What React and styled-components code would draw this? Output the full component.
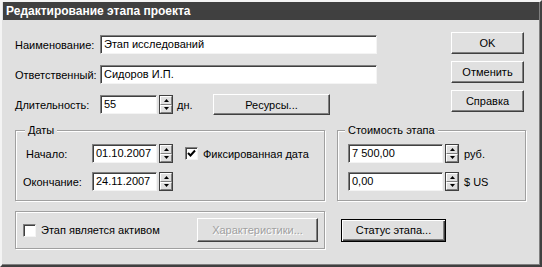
import React from 'react';
import styled, { createGlobalStyle } from 'styled-components';

const GlobalStyle = createGlobalStyle`
  body {
    margin: 0;
    background: #e0e0e0;
    font-family: "Liberation Sans", Arial, sans-serif;
    font-size: 11px;
    color: #000;
  }
`;

const Window = styled.div`
  width: 542px;
  height: 267px;
  box-sizing: border-box;
  background: #e0e0e0;
  border: 2px solid;
  border-color: #f4f4f4 #404040 #404040 #f4f4f4;
  box-shadow: inset -1px -1px 0 #808080;
  display: flex;
  flex-direction: column;
`;

const TitleBar = styled.div`
  height: 18px;
  margin: 0 1px;
  padding-left: 3px;
  background: #404040;
  color: #fff;
  font-weight: bold;
  font-size: 12px;
  line-height: 18px;
  white-space: nowrap;
`;

const Body = styled.div`
  padding: 12px 14px 0 13px;
  display: flex;
  flex-direction: column;
`;

const TopSection = styled.div`
  display: flex;
  justify-content: space-between;
  align-items: flex-start;
`;

const Fields = styled.div`
  padding-top: 3px;
  display: flex;
  flex-direction: column;
  gap: 11px;
`;

const Row = styled.div`
  display: flex;
  align-items: center;
  height: 19px;
`;

const Label = styled.span`
  width: ${p => p.$width}px;
  padding-left: ${p => p.$indent || 0}px;
  box-sizing: border-box;
  white-space: nowrap;
`;

const TextInput = styled.div`
  width: ${p => p.$width}px;
  height: 19px;
  box-sizing: border-box;
  background: #fff;
  border: 1px solid;
  border-color: #808080 #f4f4f4 #f4f4f4 #808080;
  box-shadow: inset 1px 1px 0 #404040;
  padding: 0 3px;
  line-height: 17px;
  white-space: nowrap;
  overflow: hidden;
`;

const SpinBox = styled.div`
  width: 14px;
  height: 19px;
  margin-left: 2px;
  box-sizing: border-box;
  border: 1px solid #404040;
  display: flex;
  flex-direction: column;
  background: #e0e0e0;
`;

const SpinHalf = styled.div`
  flex: 1;
  display: flex;
  align-items: center;
  justify-content: center;
  border: 1px solid;
  border-color: #fff #808080 #808080 #fff;
`;

const Unit = styled.span`
  margin-left: ${p => p.$gap}px;
  width: ${p => (p.$width ? `${p.$width}px` : 'auto')};
  white-space: nowrap;
`;

const Button = styled.div`
  width: ${p => p.$width}px;
  height: ${p => p.$height || 22}px;
  box-sizing: border-box;
  display: flex;
  align-items: center;
  justify-content: center;
  background: #e0e0e0;
  border: 1px solid;
  border-color: #fff #404040 #404040 #fff;
  box-shadow: inset -1px -1px 0 #808080;
  color: ${p => (p.$disabled ? '#a0a0a0' : '#000')};
  text-shadow: ${p => (p.$disabled ? '1px 1px 0 #fff' : 'none')};
  white-space: nowrap;
  margin-left: ${p => p.$ml || 0};
  margin-right: ${p => p.$mr || 0}px;
`;

const DefaultButton = styled(Button)`
  border: 1px solid #000;
  box-shadow: inset 1px 1px 0 #fff, inset -1px -1px 0 #404040, inset -2px -2px 0 #808080;
`;

const ButtonColumn = styled.div`
  width: 73px;
  margin-right: 2px;
  display: flex;
  flex-direction: column;
  gap: 7px;
`;

const GroupsRow = styled.div`
  display: flex;
  gap: 12px;
  margin-top: 10px;
`;

const Group = styled.fieldset`
  margin: 0;
  width: ${p => p.$width}px;
  box-sizing: border-box;
  border: 1px solid #a0a0a0;
  box-shadow: 1px 1px 0 #fff, inset 1px 1px 0 #fff;
  padding: 7px 0 9px ${p => p.$pad}px;
  display: flex;
  flex-direction: column;
  gap: 9px;
`;

const Legend = styled.legend`
  margin-left: ${p => p.$offset}px;
  padding: 0 3px;
  background: #e0e0e0;
  line-height: 13px;
`;

const BottomRow = styled.div`
  display: flex;
  align-items: center;
  margin-top: 10px;
`;

const Frame = styled.div`
  width: 310px;
  height: 38px;
  box-sizing: border-box;
  border: 1px solid #a0a0a0;
  box-shadow: 1px 1px 0 #fff, inset 1px 1px 0 #fff;
  display: flex;
  align-items: center;
  padding-left: 7px;
`;

const CheckBox = styled.div`
  width: 13px;
  height: 13px;
  box-sizing: border-box;
  background: #fff;
  border: 1px solid;
  border-color: #808080 #f4f4f4 #f4f4f4 #808080;
  box-shadow: inset 1px 1px 0 #404040;
  margin-left: ${p => p.$ml || 0}px;
  display: flex;
  align-items: center;
  justify-content: center;
`;

const CheckLabel = styled.span`
  margin-left: ${p => p.$gap}px;
  white-space: nowrap;
`;

const Arrow = ({ down }) => (
  <svg width="5" height="3" viewBox="0 0 5 3">
    <polygon points={down ? '0,0 5,0 2.5,3' : '2.5,0 5,3 0,3'} fill="#000" />
  </svg>
);

const Spinner = () => (
  <SpinBox>
    <SpinHalf><Arrow /></SpinHalf>
    <SpinHalf><Arrow down /></SpinHalf>
  </SpinBox>
);

const Check = ({ checked, ml }) => (
  <CheckBox $ml={ml}>
    {checked && (
      <svg width="9" height="9" viewBox="0 0 9 9">
        <path d="M1 4 L3.5 6.5 L8 1.5" stroke="#000" strokeWidth="2" fill="none" />
      </svg>
    )}
  </CheckBox>
);

export default function App() {
  return (
    <>
      <GlobalStyle />
      <Window>
        <TitleBar>Редактирование этапа проекта</TitleBar>
        <Body>
          <TopSection>
            <Fields>
              <Row>
                <Label $width={85}>Наименование:</Label>
                <TextInput $width={277}>Этап исследований</TextInput>
              </Row>
              <Row>
                <Label $width={85}>Ответственный:</Label>
                <TextInput $width={277}>Сидоров И.П.</TextInput>
              </Row>
              <Row>
                <Label $width={85}>Длительность:</Label>
                <TextInput $width={57}>55</TextInput>
                <Spinner />
                <Unit $gap={4} $width={36}>дн.</Unit>
                <Button $width={117} $height={21}>Ресурсы...</Button>
              </Row>
            </Fields>
            <ButtonColumn>
              <Button $width={73}>OK</Button>
              <Button $width={73}>Отменить</Button>
              <Button $width={73}>Справка</Button>
            </ButtonColumn>
          </TopSection>

          <GroupsRow>
            <Group $width={310} $pad={7}>
              <Legend $offset={2}>Даты</Legend>
              <Row>
                <Label $width={69} $indent={3}>Начало:</Label>
                <TextInput $width={65}>01.10.2007</TextInput>
                <Spinner />
                <Check checked ml={12} />
                <CheckLabel $gap={5}>Фиксированная дата</CheckLabel>
              </Row>
              <Row>
                <Label $width={69}>Окончание:</Label>
                <TextInput $width={65}>24.11.2007</TextInput>
                <Spinner />
              </Row>
            </Group>
            <Group $width={189} $pad={10}>
              <Legend $offset={-3}>Стоимость этапа</Legend>
              <Row>
                <TextInput $width={95}>7 500,00</TextInput>
                <Spinner />
                <Unit $gap={5}>руб.</Unit>
              </Row>
              <Row>
                <TextInput $width={95}>0,00</TextInput>
                <Spinner />
                <Unit $gap={5}>$ US</Unit>
              </Row>
            </Group>
          </GroupsRow>

          <BottomRow>
            <Frame>
              <Check />
              <CheckLabel $gap={5}>Этап является активом</CheckLabel>
              <Button $width={121} $height={24} $ml="auto" $mr={6} $disabled>Характеристики...</Button>
            </Frame>
            <DefaultButton $width={105} $height={23} $ml="16px">Статус этапа...</DefaultButton>
          </BottomRow>
        </Body>
      </Window>
    </>
  );
}
